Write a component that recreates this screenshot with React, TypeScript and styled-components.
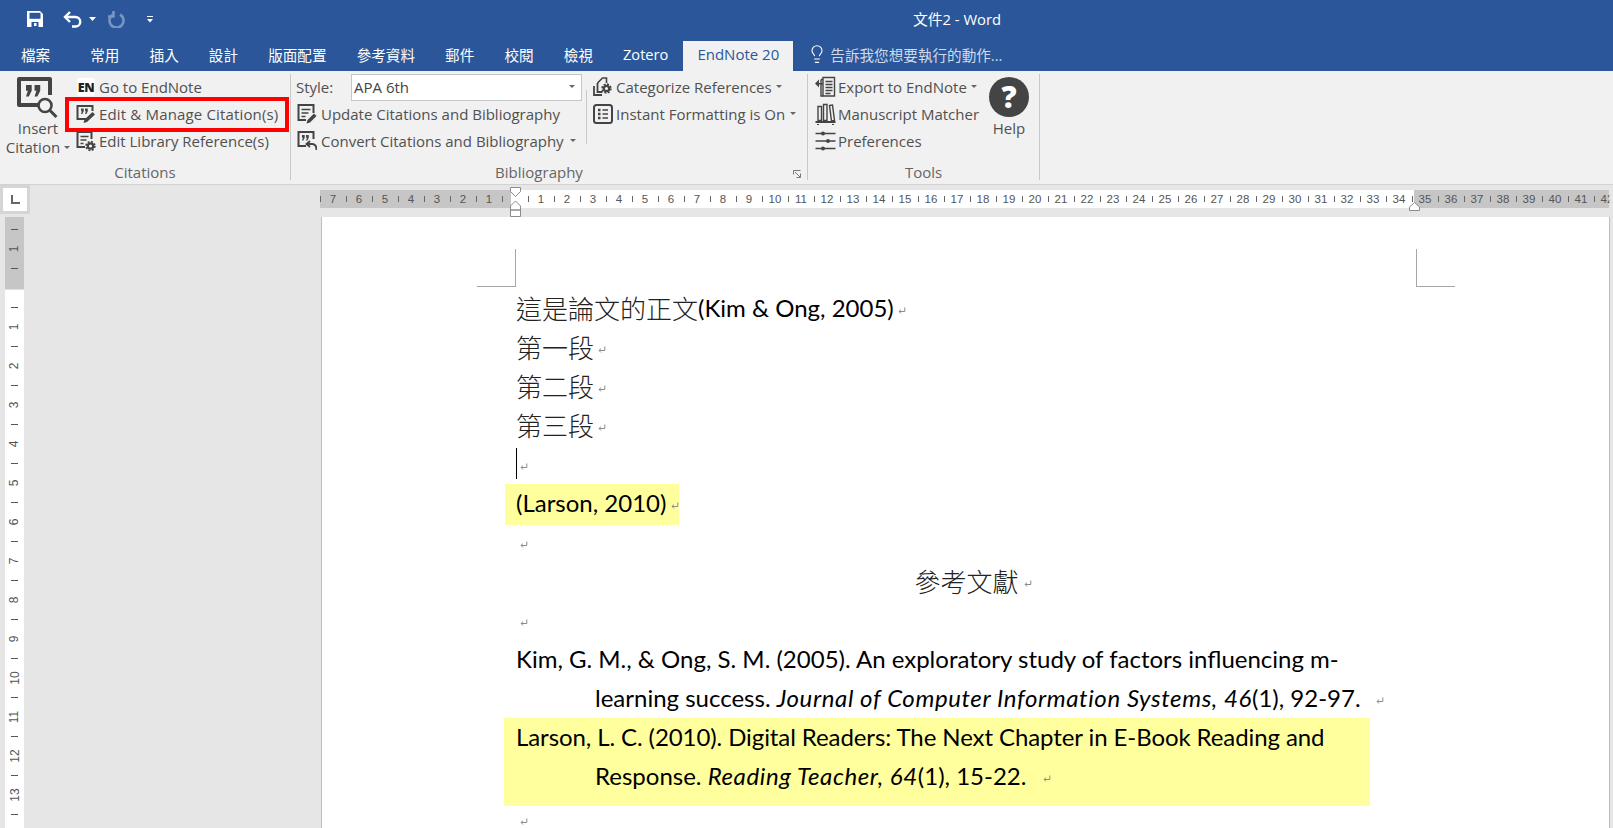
import React from "react";
import styled, { createGlobalStyle } from "styled-components";
import { Lightbulb } from "lucide-react";

const Global = createGlobalStyle`
  html, body { margin: 0; padding: 0; background: #e6e6e6; }
  #root { width: 1613px; height: 828px; overflow: hidden; }
`;

const UI = `"Open Sans", "Noto Sans CJK TC", sans-serif`;
const DOC = `"Lato", "Noto Sans CJK TC", sans-serif`;

const Shell = styled.div`
  width: 1613px; height: 828px; display: flex; flex-direction: column; overflow: hidden;
  font-family: ${UI}; background: #e6e6e6;
`;
const TitleBar = styled.div`
  height: 41px; flex: none; background: #2b579a; display: flex; align-items: center;
  padding-left: 27px; position: relative; box-sizing: border-box; color: #fff;
`;
const QuickIcon = styled.svg<{ $ml?: number }>`
  flex: none; margin-left: ${(p) => p.$ml ?? 0}px; margin-top: -3px;
`;
const Title = styled.div`
  position: absolute; left: 0; right: 0; top: 9px; text-align: center; font-size: 14.8px; line-height: 20px; padding-left: 301px;
`;
const TabBar = styled.div`
  height: 30px; flex: none; background: #2b579a; display: flex; align-items: stretch; color: #fff;
  font-size: 14.6px;
`;
const Tab = styled.div<{ $active?: boolean; $first?: boolean }>`
  display: flex; align-items: center; justify-content: center;
  padding: ${(p) => (p.$first ? "0 25px 0 21px" : "0 15.05px")};
  ${(p) => p.$active && "background:#f1f1f1;color:#2b579a;padding:0;width:110px;margin-left:0;font-size:15px;"}
  padding-bottom: 4px;
`;
const Tell = styled.div`
  display: flex; align-items: center; gap: 3px; margin-left: 14px; color: #cfdaeb; font-size: 14.6px; padding-bottom: 4px;
`;
const Ribbon = styled.div`
  height: 114px; flex: none; box-sizing: border-box; background: #f1f1f1; border-bottom: 1px solid #d2d2d2;
  padding-top: 3px; display: flex; align-items: flex-start; color: #505050; font-size: 15px;
`;
const Group = styled.div<{ $w: number }>`
  width: ${(p) => p.$w}px; height: 106px; flex: none; box-sizing: border-box; border-right: 1px solid #c8c8c8;
  display: flex; flex-direction: column;
`;
const GroupBody = styled.div`
  flex: 1; display: flex; align-items: flex-start; min-height: 0;
`;
const LabelRow = styled.div`
  height: 16px; flex: none; display: flex; align-items: center;
`;
const GroupLabel = styled.div`
  flex: 1; text-align: center; font-size: 15px; line-height: 16px; color: #666;
`;
const Launcher = styled.svg`
  flex: none; margin: 3px 6px 0 6px;
`;
const BigButton = styled.div`
  width: 76px; flex: none; display: flex; flex-direction: column; align-items: center; line-height: 19px;
`;
const BigLabel = styled.div<{ $first?: boolean }>`
  margin-top: ${(p) => (p.$first ? 1 : 0)}px; text-align: center; line-height: 19px; white-space: nowrap;
`;
const Column = styled.div<{ $shift?: number; $w?: number }>`
  display: flex; flex-direction: column; flex: none;
  ${(p) => p.$shift && `margin-left:${p.$shift}px;`}
  ${(p) => p.$w && `width:${p.$w}px;`}
`;
const Row = styled.div<{ $pad: number; $gap?: number; $marked?: boolean }>`
  height: 27px; box-sizing: border-box; display: flex; align-items: center; white-space: nowrap;
  padding-left: ${(p) => p.$pad}px; gap: ${(p) => p.$gap ?? 3}px; padding-bottom: 1px;
  ${(p) => p.$marked && "outline: 4px solid #f00; position: relative; letter-spacing: 0.16px;"}
`;
const Caret = styled.span<{ $ml?: number }>`
  display: inline-block; width: 0; height: 0; border-left: 3.5px solid transparent; border-right: 3.5px solid transparent;
  border-top: 3.5px solid #666; margin-left: ${(p) => p.$ml ?? 4}px; vertical-align: middle; position: relative; top: -1px;
`;
const EnBadge = styled.span`
  width: 18px; height: 18px; flex: none; background: #fff; border-radius: 3px; color: #222; font-weight: 800; font-size: 12.5px;
  display: flex; align-items: center; justify-content: center; margin: 0 3px 0 0; letter-spacing: -0.3px;
`;
const StyleLabel = styled.span`
  width: 55px; flex: none;
`;
const Combo = styled.div`
  width: 231px; height: 27px; box-sizing: border-box; background: #fff; border: 1px solid #c6c6c6; display: flex; align-items: center;
  padding: 0 6px 0 2px; justify-content: space-between; color: #444; margin-left: 0;
`;
const InnerSep = styled.div`
  width: 1px; height: 54px; background: #c8c8c8; flex: none; margin-top: 16px;
`;
const HelpColumn = styled.div`
  width: 42px; flex: none; display: flex; flex-direction: column; align-items: center; margin-top: 3px;
`;
const HelpCircle = styled.div`
  width: 40px; height: 40px; border-radius: 50%; background: #444; color: #fff; font-weight: 800; font-size: 30px; line-height: 40px; text-align: center;
  font-family: "Open Sans", sans-serif; margin-left: -2px;
`;
const HelpLabel = styled.div`
  line-height: 20px; margin: 1px 0 0 -2px;
`;

const DocArea = styled.div`
  flex: 1; min-height: 0; display: flex; background: #e6e6e6; overflow: hidden;
`;
const LeftRail = styled.div`
  width: 320px; flex: none; display: flex; flex-direction: column;
`;
const Corner = styled.div`
  width: 24px; height: 23px; background: #fff; border: 3px solid #d5d5d5; flex: none; display: flex; align-items: center; justify-content: center;
`;
const VRuler = styled.div`
  width: 19px; margin: 3px 0 0 5px; flex: 1; padding-top: 2.25px; box-sizing: border-box; overflow: hidden;
  background: linear-gradient(180deg, #c6c6c6 0 72px, #fff 73px);
`;
const VCell = styled.div`
  height: 19.5px; display: flex; align-items: center; justify-content: center; font-family: "Liberation Sans", sans-serif;
  font-size: 12px; color: #555;
`;
const VNum = styled.span`
  display: block; transform: rotate(-90deg); white-space: nowrap;
`;
const VTick = styled.span`
  display: block; width: 7px; height: 1px; background: #555;
`;
const Main = styled.div`
  flex: 1; min-width: 0; display: flex; flex-direction: column; padding-top: 5px;
`;
const HRuler = styled.div`
  height: 18px; width: 1289px; flex: none; position: relative; 
  background: linear-gradient(90deg, #c6c6c6 0 191px, #fff 191px 1094px, #c6c6c6 1094px);
`;
const HTrack = styled.div`
  display: flex; height: 100%; margin-left: -6.5px; clip-path: inset(0 0 0 6.5px); width: 1296px; overflow: hidden;
`;
const HCell = styled.div`
  width: 13px; flex: none; display: flex; align-items: center; justify-content: center; font-family: "Liberation Sans", sans-serif;
  font-size: 11.5px; color: #555; white-space: nowrap;
`;
const HTick = styled.span`
  display: block; width: 1px; height: 6px; background: #666;
`;
const Marker = styled.svg<{ $left: number; $top: number }>`
  position: absolute; left: ${(p) => p.$left}px; top: ${(p) => p.$top}px;
`;
const Page = styled.div`
  margin: 9px 0 0 1px; width: 1289px; flex: 1; box-sizing: border-box; background: #fff; border-left: 1px solid #bdbdbd; border-right: 1px solid #bdbdbd;
  padding: 32px 0 0 194px; overflow: hidden; font-family: ${DOC}; color: #000; font-size: 24px;
`;
const MarkRow = styled.div`
  height: 38px; margin: 0 0 3px -39px; display: flex; gap: 900px;
`;
const CropMark = styled.div<{ $right?: boolean }>`
  width: 39px; height: 38px; box-sizing: border-box; border-bottom: 1px solid #a6a6a6;
  ${(p) => (p.$right ? "border-left: 1px solid #a6a6a6;" : "border-right: 1px solid #a6a6a6;")}
`;
const Line = styled.div<{ $center?: boolean; $indent?: boolean; $tight?: boolean }>`
  height: 39px; box-sizing: border-box; padding-bottom: 4px; line-height: 35px; white-space: nowrap; display: flex; align-items: center;
  ${(p) => p.$center && "justify-content: center; width: 914px;"}
  ${(p) => p.$indent && "padding-left: 79px;"}
  ${(p) => p.$tight && "letter-spacing: -0.09px;"}
`;
const Cjk = styled.span`
  font-family: "Noto Sans CJK TC", sans-serif; font-weight: 300; font-size: 26px; color: #222;
`;
const Ital = styled.i`
  letter-spacing: 0.6px;
`;
const InlineHighlight = styled.div`
  background: #ffff9e; margin-left: -11px; padding: 0 0 4px 11px; width: 163px; box-sizing: content-box; height: 37px;
  display: flex; align-items: center; margin-top: -1px; margin-bottom: -1px; white-space: nowrap;
`;
const BlockHighlight = styled.div`
  background: #ffff9e; margin: -1px 0 0 -12px; padding: 1px 0 9px 12px; width: 854px;
`;
const ReturnSvg = styled.svg<{ $ml?: number }>`
  flex: none; margin-left: ${(p) => p.$ml ?? 6}px; margin-top: 7px;
`;
const Caretline = styled.div`
  width: 1px; height: 31px; background: #000; flex: none;
`;
const LastLine = styled.div`
  height: 28px; box-sizing: border-box; padding-bottom: 4px; display: flex; align-items: center;
`;

const Ret = ({ ml }: { ml?: number }) => (
  <ReturnSvg $ml={ml} width="8" height="8" viewBox="0 0 8 8">
    <path d="M6.8 0.5V4.5H1.2M3 2.6L1 4.5L3 6.5" fill="none" stroke="#8a8a8a" strokeWidth="1" />
  </ReturnSvg>
);

const Quotes = ({ x, y, s = 1 }: { x: number; y: number; s?: number }) => (
  <g transform={`translate(${x} ${y}) scale(${s})`} fill="#444">
    <path d="M0 0h3v3l-1.500 3H0l1-3H0z" />
    <path d="M4.500 0h3v3L6 6H4.500l1-3h-1z" />
  </g>
);
const Gear = ({ cx, cy }: { cx: number; cy: number }) => (
  <g fill="none" stroke="#444">
    <circle cx={cx} cy={cy} r="2.700" strokeWidth="2.200" />
    <circle cx={cx} cy={cy} r="4.400" strokeWidth="1.600" strokeDasharray="2 1.450" />
  </g>
);
const Icon = ({ children, w = 20 }: { children: React.ReactNode; w?: number }) => (
  <svg width={w} height="22" viewBox={`0 0 ${w} 22`} style={{ flex: "none" }}>{children}</svg>
);

const S = { fill: "none", stroke: "#444", strokeWidth: 2 } as const;
const L = { fill: "none", stroke: "#444", strokeWidth: 1.4 } as const;

const InsertIcon = () => (
  <svg width="42" height="42" viewBox="0 0 42 42" style={{ marginLeft: "-1px", marginTop: "2px" }}>
    <path d="M22 29H2V3h31v16" fill="none" stroke="#444" strokeWidth="4" strokeLinejoin="round" />
    <Quotes x={9} y={9} s={1.9} />
    <circle cx="28" cy="29.500" r="6.500" fill="none" stroke="#444" strokeWidth="2.600" />
    <path d="M33 34.500L39.500 41" fill="none" stroke="#444" strokeWidth="3" />
  </svg>
);
const EditIcon = () => (
  <Icon>
    <path d="M11 16H1.500V3h15v5" {...S} />
    <Quotes x={5} y={5.500} s={0.9} />
    <path d="M7.500 20l1-3.500 8-7.500 2.500 2.500-8 7.500z" fill="#444" />
  </Icon>
);
const LibraryIcon = () => (
  <Icon>
    <path d="M9 17H1.500V2h14v7" {...S} />
    <path d="M4.500 6.500h8M4.500 10h6M4.500 13.500h3" {...L} />
    <Gear cx={14.500} cy={16} />
  </Icon>
);
const UpdateIcon = () => (
  <Icon>
    <path d="M9 17H1.500V2h15v8" {...S} />
    <path d="M4.500 6.500h9M4.500 10h7M4.500 13.500h4" {...L} />
    <path d="M9.500 20.500l1-3.500 6.500-6.500 2.500 2.500-6.500 6.500z" fill="#444" />
  </Icon>
);
const ConvertIcon = () => (
  <Icon>
    <path d="M9 16H1.500V2h15v7" {...S} />
    <Quotes x={5} y={5} s={0.9} />
    <path d="M10 14h5c3 0 4.500 2.500 4.500 6M13 11l-3.500 3 3.500 3" fill="none" stroke="#444" strokeWidth="1.900" />
  </Icon>
);
const CategorizeIcon = () => (
  <Icon>
    <path d="M4.500 7l5-5h4v5" fill="none" stroke="#444" strokeWidth="1.600" />
    <path d="M1 10v9h8M4.500 7v9h5" fill="none" stroke="#444" strokeWidth="1.800" />
    <Gear cx={13.500} cy={12.500} />
  </Icon>
);
const InstantIcon = () => (
  <Icon>
    <rect x="1" y="2" width="18" height="18" rx="2.500" {...S} />
    <path d="M5 7h2.500M5 11h2.500M5 15h2.500" fill="none" stroke="#444" strokeWidth="2.400" />
    <path d="M9.500 7H15M9.500 11H15M9.500 15H15" fill="none" stroke="#444" strokeWidth="1.700" />
  </Icon>
);
const ExportIcon = () => (
  <Icon w={21}>
    <path d="M8 1.500h11.500V20H8z" {...L} />
    <path d="M6 3.500H8M6 3.500v16.500h2" {...L} />
    <path d="M10.500 5.500h7M10.500 8.500h7M10.500 11.500h7M10.500 14.500h7M10.500 17.500h5" fill="none" stroke="#444" strokeWidth="1.300" />
    <path d="M8 7H4V3.500L0 7.500l4 4V8.500h4z" fill="#444" />
  </Icon>
);
const MatcherIcon = () => (
  <Icon w={21}>
    <path d="M3 3.500h3.500v14H3zM8.500 1.500H12v16H8.500z" {...L} />
    <path d="M14.500 2.500l3-.500 2 15.500-3 .500z" {...L} />
    <path d="M.500 19h20" fill="none" stroke="#444" strokeWidth="2" />
    <path d="M2 21.500h2M17 21.500h2" fill="none" stroke="#444" strokeWidth="1.200" />
  </Icon>
);
const PrefsIcon = () => (
  <Icon w={21}>
    <path d="M.500 3.500h20M.500 11h20M.500 18.500h20" fill="none" stroke="#444" strokeWidth="1.400" />
    <rect x="6" y="1.500" width="4" height="4" rx="2" fill="#444" />
    <rect x="11" y="9" width="4" height="4" rx="2" fill="#444" />
    <rect x="6" y="16.500" width="4" height="4" rx="2" fill="#444" />
  </Icon>
);

const hCells: number[] = [];
for (let k = -15; k <= 84; k++) hCells.push(k);
const vCells: number[] = [];
for (let k = -3; k <= 27; k++) vCells.push(k);

const HRulerCell = ({ k }: { k: number }) => (
  <HCell>{k === 0 ? null : k % 2 === 0 ? Math.abs(k / 2) : <HTick />}</HCell>
);
const VRulerCell = ({ k }: { k: number }) => (
  <VCell>{k === 0 ? null : k % 2 === 0 ? <VNum>{Math.abs(k / 2)}</VNum> : <VTick />}</VCell>
);

const tabs = ["常用", "插入", "設計", "版面配置", "參考資料", "郵件", "校閱", "檢視", "Zotero"];

export default function App() {
  return (
    <Shell>
      <Global />
      <TitleBar>
        <QuickIcon width="16" height="16" viewBox="0 0 16 16">
          <path d="M0 0h13l3 3v13H0z" fill="#fff" />
          <rect x="2.500" y="1.800" width="11" height="6" fill="#2b579a" />
          <rect x="4.500" y="11" width="7" height="5" fill="#2b579a" />
          <rect x="7" y="12" width="2.500" height="3" fill="#fff" />
        </QuickIcon>
        <QuickIcon $ml={20} width="19" height="17" viewBox="0 0 19 17">
          <path d="M2 6h10.500a4.500 4.500 0 0 1 0 9.500H9" fill="none" stroke="#fff" strokeWidth="2.400" />
          <path d="M7 1L2 6l5 5" fill="none" stroke="#fff" strokeWidth="2.400" />
        </QuickIcon>
        <QuickIcon $ml={7} width="7" height="4" viewBox="0 0 7 4">
          <path d="M0 0h7L3.500 4z" fill="#fff" />
        </QuickIcon>
        <QuickIcon $ml={12} width="17" height="17" viewBox="0 0 17 17">
          <path d="M5 3.500A7 7 0 1 0 12 3.500M5.500 0v5.500H0" fill="none" stroke="#7794c2" strokeWidth="2.600" />
        </QuickIcon>
        <QuickIcon $ml={22} width="6" height="7" viewBox="0 0 6 7">
          <path d="M0 .500h6" stroke="#fff" strokeWidth="1" />
          <path d="M0 3h6L3 6.500z" fill="#fff" />
        </QuickIcon>
        <Title>文件2 - Word</Title>
      </TitleBar>
      <TabBar>
        <Tab $first>檔案</Tab>
        {tabs.map((t) => (
          <Tab key={t}>{t}</Tab>
        ))}
        <Tab $active>EndNote 20</Tab>
        <Tell>
          <Lightbulb size={20} strokeWidth={1.300} color="#fff" />
          告訴我您想要執行的動作...
        </Tell>
      </TabBar>
      <Ribbon>
        <Group $w={291}>
          <GroupBody>
            <BigButton>
              <InsertIcon />
              <BigLabel $first>Insert</BigLabel>
              <BigLabel>Citation<Caret /></BigLabel>
            </BigButton>
            <Column $shift={-7} $w={216}>
              <Row $pad={8} $gap={1}><EnBadge>EN</EnBadge>Go to EndNote</Row>
              <Row $pad={7} $gap={3} $marked><EditIcon />Edit &amp; Manage Citation(s)</Row>
              <Row $pad={7} $gap={3}><LibraryIcon />Edit Library Reference(s)</Row>
            </Column>
          </GroupBody>
          <LabelRow><GroupLabel>Citations</GroupLabel></LabelRow>
        </Group>
        <Group $w={517}>
          <GroupBody>
            <Column $w={295}>
              <Row $pad={5} $gap={0}>
                <StyleLabel>Style:</StyleLabel>
                <Combo>APA 6th<Caret /></Combo>
              </Row>
              <Row $pad={6} $gap={4}><UpdateIcon />Update Citations and Bibliography</Row>
              <Row $pad={6} $gap={4}><ConvertIcon />Convert Citations and Bibliography<Caret $ml={2} /></Row>
            </Column>
            <InnerSep />
            <Column>
              <Row $pad={6}><CategorizeIcon />Categorize References<Caret $ml={1} /></Row>
              <Row $pad={6}><InstantIcon />Instant Formatting is On<Caret $ml={2} /></Row>
            </Column>
          </GroupBody>
          <LabelRow>
            <GroupLabel>Bibliography</GroupLabel>
            <Launcher width="8" height="8" viewBox="0 0 8 8">
              <path d="M.500 4.500V.500H7.500M2 2l5 5M7.500 3.500V7.500H3.500" fill="none" stroke="#777" strokeWidth="1" />
            </Launcher>
          </LabelRow>
        </Group>
        <Group $w={232}>
          <GroupBody>
            <Column $w={181}>
              <Row $pad={7} $gap={2}><ExportIcon />Export to EndNote<Caret $ml={2} /></Row>
              <Row $pad={7} $gap={2}><MatcherIcon />Manuscript Matcher</Row>
              <Row $pad={7} $gap={2}><PrefsIcon />Preferences</Row>
            </Column>
            <HelpColumn>
              <HelpCircle>?</HelpCircle>
              <HelpLabel>Help</HelpLabel>
            </HelpColumn>
          </GroupBody>
          <LabelRow><GroupLabel>Tools</GroupLabel></LabelRow>
        </Group>
      </Ribbon>
      <DocArea>
        <LeftRail>
          <Corner>
            <svg width="9" height="9" viewBox="0 0 9 9">
              <path d="M1 0v8h8" fill="none" stroke="#666" strokeWidth="2" />
            </svg>
          </Corner>
          <VRuler>
            {vCells.map((k) => (
              <VRulerCell key={k} k={k} />
            ))}
          </VRuler>
        </LeftRail>
        <Main>
          <HRuler>
            <HTrack>
              {hCells.map((k) => (
                <HRulerCell key={k} k={k} />
              ))}
            </HTrack>
            <Marker $left={190} $top={-3} width="11" height="30" viewBox="0 0 11 30">
              <path d="M.500.500h10v4l-5 5-5-5zM5.500 14l5 5v4h-10v-4zM.500 23h10v6.500H.500z" fill="#fff" stroke="#8c8c8c" strokeWidth="1" />
            </Marker>
            <Marker $left={1089} $top={12} width="11" height="9" viewBox="0 0 11 9">
              <path d="M5.500.500l5 4.500v3.500H.500V5z" fill="#fff" stroke="#8c8c8c" strokeWidth="1" />
            </Marker>
          </HRuler>
          <Page>
            <MarkRow>
              <CropMark />
              <CropMark $right />
            </MarkRow>
            <Line><Cjk>這是論文的正文</Cjk>(Kim &amp; Ong, 2005)<Ret ml={4} /></Line>
            <Line><Cjk>第一段</Cjk><Ret ml={4} /></Line>
            <Line><Cjk>第二段</Cjk><Ret ml={4} /></Line>
            <Line><Cjk>第三段</Cjk><Ret ml={4} /></Line>
            <Line><Caretline /><Ret ml={3} /></Line>
            <InlineHighlight>(Larson, 2010)<Ret ml={5} /></InlineHighlight>
            <Line><Ret ml={4} /></Line>
            <Line $center><Cjk>參考文獻</Cjk><Ret ml={5} /></Line>
            <Line><Ret ml={4} /></Line>
            <Line>Kim, G. M., &amp; Ong, S. M. (2005). An exploratory study of factors influencing m-</Line>
            <Line $indent>learning success.&nbsp;<Ital>Journal of Computer Information Systems, 46</Ital>(1), 92-97.<Ret ml={15} /></Line>
            <BlockHighlight>
              <Line $tight>Larson, L. C. (2010). Digital Readers: The Next Chapter in E-Book Reading and</Line>
              <Line $indent>Response.&nbsp;<Ital>Reading Teacher, 64</Ital>(1), 15-22.<Ret ml={17} /></Line>
            </BlockHighlight>
            <LastLine><Ret ml={4} /></LastLine>
          </Page>
        </Main>
      </DocArea>
    </Shell>
  );
}
